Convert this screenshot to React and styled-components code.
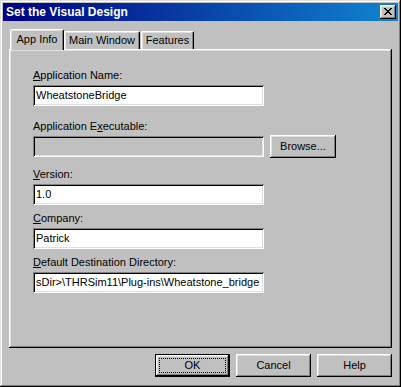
import React from "react";
import styled, { createGlobalStyle } from "styled-components";

const Global = createGlobalStyle`
  html, body { margin: 0; padding: 0; background: #c0c0c0; }
  body { font-family: "Liberation Sans", Arial, sans-serif; font-size: 11px; color: #000; }
  * { box-sizing: border-box; }
`;

const Window = styled.div`
  width: 401px;
  height: 387px;
  padding: 3px;
  background: #c0c0c0;
  box-shadow: inset -1px -1px #000, inset 1px 1px #dfdfdf, inset -2px -2px #808080, inset 2px 2px #fff;
  display: flex;
  flex-direction: column;
`;

const TitleBar = styled.div`
  height: 18px;
  flex: none;
  display: flex;
  align-items: center;
  justify-content: space-between;
  padding: 0 2px 0 3px;
  background: linear-gradient(to right, #000080, #1084d0);
`;

const Title = styled.span`
  color: #fff;
  font-weight: bold;
  font-size: 12px;
  line-height: 14px;
  white-space: nowrap;
`;

const CloseButton = styled.div`
  width: 16px;
  height: 14px;
  background: #c0c0c0;
  box-shadow: inset -1px -1px #000, inset 1px 1px #fff, inset -2px -2px #808080, inset 2px 2px #dfdfdf;
  display: flex;
  align-items: center;
  justify-content: center;
  padding-bottom: 1px;
`;

const Body = styled.div`
  flex: 1;
  display: flex;
  flex-direction: column;
  padding: 8px 6px 7px 6px;
`;

const TabStrip = styled.div`
  height: 20px;
  display: flex;
  align-items: flex-end;
  padding-left: 1px;
`;

const Tab = styled.div`
  width: ${(p) => p.$w}px;
  height: ${(p) => (p.$active ? 21 : 18)}px;
  margin-left: ${(p) => p.$ml || 0}px;
  margin-bottom: ${(p) => (p.$active ? -1 : 0)}px;
  position: ${(p) => (p.$active ? "relative" : "static")};
  z-index: ${(p) => (p.$active ? 1 : "auto")};
  background: #c0c0c0;
  border-top: 1px solid #fff;
  border-left: 1px solid #fff;
  border-right: 1px solid #000;
  border-top-left-radius: 2px;
  border-top-right-radius: 2px;
  box-shadow: inset -1px 0 #808080, inset 1px 1px #dfdfdf;
  display: flex;
  align-items: ${(p) => (p.$active ? "flex-start" : "center")};
  padding-top: ${(p) => (p.$active ? 3 : 0)}px;
  justify-content: center;
  line-height: 13px;
  white-space: nowrap;
`;

const Panel = styled.div`
  height: 299px;
  flex: none;
  background: #c0c0c0;
  box-shadow: inset -1px -1px #000, inset 1px 1px #fff, inset -2px -2px #808080, inset 2px 2px #dfdfdf;
  padding: 20px 24px 0 24px;
  display: flex;
  flex-direction: column;
`;

const Field = styled.div`
  display: flex;
  flex-direction: column;
  margin-top: ${(p) => p.$mt || 0}px;
`;

const Label = styled.div`
  line-height: 13px;
  height: 13px;
  margin-bottom: 3px;
  white-space: nowrap;
`;

const Mn = styled.span`
  text-decoration: underline;
`;

const Row = styled.div`
  display: flex;
  align-items: center;
  gap: 6px;
`;

const TextBox = styled.div`
  width: 231px;
  height: 21px;
  padding: 0 3px;
  background: ${(p) => (p.$disabled ? "#c0c0c0" : "#fff")};
  box-shadow: inset 1px 1px #808080, inset -1px -1px #fff, inset 2px 2px #000, inset -2px -2px #dfdfdf;
  display: flex;
  align-items: center;
  line-height: 13px;
  white-space: nowrap;
  overflow: hidden;
`;

const Button = styled.div`
  width: ${(p) => p.$w}px;
  height: 23px;
  margin: ${(p) => (p.$inline ? "-1px 0" : "0")};
  background: #c0c0c0;
  box-shadow: ${(p) =>
    p.$default
      ? "inset 0 0 0 1px #000, inset -2px -2px #000, inset 2px 2px #fff, inset -3px -3px #808080, inset 3px 3px #dfdfdf"
      : "inset -1px -1px #000, inset 1px 1px #fff, inset -2px -2px #808080, inset 2px 2px #dfdfdf"};
  display: flex;
  align-items: center;
  justify-content: center;
  line-height: 13px;
  white-space: nowrap;
`;

const FocusRect = styled.div`
  flex: 1;
  align-self: stretch;
  margin: 4px;
  border: 1px dotted #000;
  display: flex;
  align-items: center;
  justify-content: center;
`;

const Buttons = styled.div`
  margin-top: 6px;
  display: flex;
  justify-content: flex-end;
  gap: 6px;
`;

const CloseGlyph = () => (
  <svg width="8" height="7" viewBox="0 0 8 7" shapeRendering="crispEdges">
    <path
      fill="#000"
      d="M0 0h2v1h-2z M6 0h2v1h-2z M1 1h2v1h-2z M5 1h2v1h-2z M2 2h4v1h-4z M3 3h2v1h-2z M2 4h4v1h-4z M1 5h2v1h-2z M5 5h2v1h-2z M0 6h2v1h-2z M6 6h2v1h-2z"
    />
  </svg>
);

export default function App() {
  return (
    <>
      <Global />
      <Window>
        <TitleBar>
          <Title>Set the Visual Design</Title>
          <CloseButton>
            <CloseGlyph />
          </CloseButton>
        </TitleBar>
        <Body>
          <TabStrip>
            <Tab $active $w={54}>App Info</Tab>
            <Tab $w={76}>Main Window</Tab>
            <Tab $w={53} $ml={1}>Features</Tab>
          </TabStrip>
          <Panel>
            <Field>
              <Label><Mn>A</Mn>pplication Name:</Label>
              <TextBox>WheatstoneBridge</TextBox>
            </Field>
            <Field $mt={14}>
              <Label>Application E<Mn>x</Mn>ecutable:</Label>
              <Row>
                <TextBox $disabled />
                <Button $w={66} $inline>Browse...</Button>
              </Row>
            </Field>
            <Field $mt={11}>
              <Label><Mn>V</Mn>ersion:</Label>
              <TextBox>1.0</TextBox>
            </Field>
            <Field $mt={7}>
              <Label><Mn>C</Mn>ompany:</Label>
              <TextBox>Patrick</TextBox>
            </Field>
            <Field $mt={7}>
              <Label><Mn>D</Mn>efault Destination Directory:</Label>
              <TextBox>sDir&gt;\THRSim11\Plug-ins\Wheatstone_bridge</TextBox>
            </Field>
          </Panel>
          <Buttons>
            <Button $w={75} $default>
              <FocusRect>OK</FocusRect>
            </Button>
            <Button $w={75}>Cancel</Button>
            <Button $w={75}>Help</Button>
          </Buttons>
        </Body>
      </Window>
    </>
  );
}
